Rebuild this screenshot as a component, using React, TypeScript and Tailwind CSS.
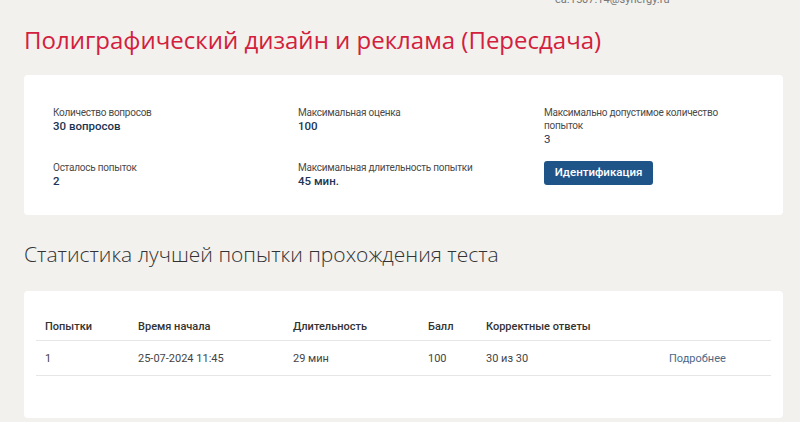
import React from "react";

const body = { fontFamily: 'Roboto, "Noto Sans", sans-serif' };
const title = { fontFamily: '"Open Sans", "Noto Sans", sans-serif' };

function Field({ label, value, light }: { label: React.ReactNode; value: string; light?: boolean }) {
  return (
    <div className="flex flex-col">
      <div className="text-[10px] leading-[13px] tracking-[-0.25px] text-[#4a4a4a]">{label}</div>
      <div className={`text-[11.5px] leading-[14px] text-[#1d3553] ${light ? "font-normal" : "font-medium"}`}>{value}</div>
    </div>
  );
}

const cols = "grid grid-cols-[93px_155px_135px_58px_183px_1fr]";

export default function App() {
  return (
    <div className="w-[800px] h-[422px] overflow-hidden bg-[#f2f1ee] relative" style={body}>
      <div className="absolute left-[555px] top-[-8px] text-[11px] text-[#777]">ea.1507.14@synergy.ru</div>
      <div className="pl-[24px] pr-[17px] pt-[24px] flex flex-col">
        <h1 className="text-[24px] leading-[32px] text-[#d3203c] font-normal" style={title}>
          Полиграфический дизайн и реклама (Пересдача)
        </h1>
        <div className="mt-[19px] h-[140px] bg-white rounded-[4px] pl-[29px] pt-[31px] grid grid-cols-[245px_246px_1fr]">
          <div className="flex flex-col gap-[28px]">
            <Field label="Количество вопросов" value="30 вопросов" />
            <Field label="Осталось попыток" value="2" />
          </div>
          <div className="flex flex-col gap-[28px]">
            <Field label="Максимальная оценка" value="100" />
            <Field label="Максимальная длительность попытки" value="45 мин." />
          </div>
          <div className="flex flex-col">
            <Field label={<>Максимально допустимое количество<br />попыток</>} value="3" light />
            <button className="mt-[15px] w-[109px] h-[24px] rounded-[3px] bg-[#1f5489] text-white text-[11.5px] font-medium">
              Идентификация
            </button>
          </div>
        </div>
        <h2 className="mt-[25px] text-[21px] leading-[28px] text-[#333] font-light" style={title}>
          Статистика лучшей попытки прохождения теста
        </h2>
        <div className="mt-[23px] h-[127px] bg-white rounded-[4px] px-[12px] pt-[28px]">
          <div className={`${cols} text-[11px] leading-[16px] text-[#333] border-b border-[#e6e6e6] h-[22px] pl-[9px]`}>
            <div className="font-medium">Попытки</div>
            <div className="font-medium">Время начала</div>
            <div className="font-medium">Длительность</div>
            <div className="font-medium">Балл</div>
            <div className="font-medium">Корректные ответы</div>
            <div></div>
          </div>
          <div className={`${cols} text-[11px] text-[#444] border-b border-[#e6e6e6] h-[35px] items-center pl-[9px] pt-[3px]`}>
            <div>1</div>
            <div>25-07-2024 11:45</div>
            <div>29 мин</div>
            <div>100</div>
            <div>30 из 30</div>
            <div className="text-[#4b6a88]">Подробнее</div>
          </div>
        </div>
      </div>
    </div>
  );
}
